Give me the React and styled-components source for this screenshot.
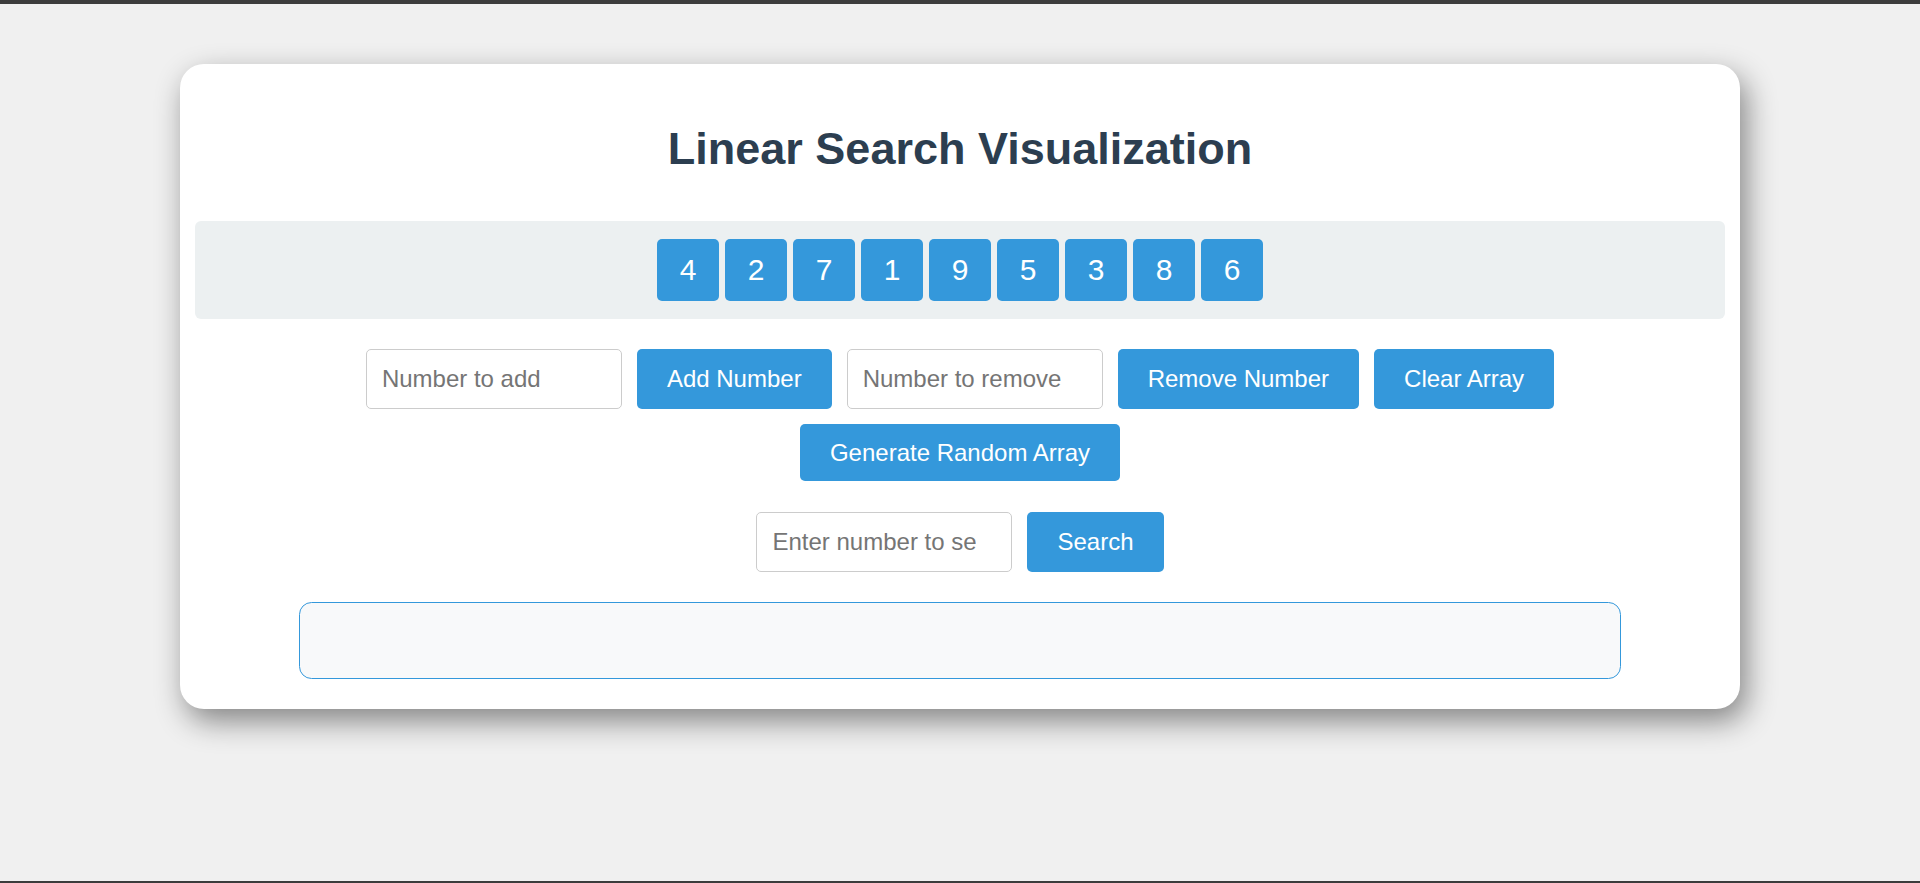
import React from "react";
import styled, { createGlobalStyle } from "styled-components";

const GlobalStyle = createGlobalStyle`
  * {
    box-sizing: border-box;
  }

  body {
    margin: 0;
    background: #f0f0f0;
    font-family: "Liberation Sans", Arial, sans-serif;
  }
`;

const Page = styled.div`
  min-height: 100vh;
  display: flex;
  flex-direction: column;
`;

const FrameBar = styled.div`
  height: ${(p) => p.$size}px;
  background: #3c3c3c;
  flex-shrink: 0;
`;

const Main = styled.main`
  flex: 1;
  padding-top: 60px;
`;

const Card = styled.div`
  width: 1560px;
  margin: 0 auto;
  background: #fff;
  border-radius: 24px;
  padding: 59px 15px 30px;
  box-shadow: 6px 12px 30px rgba(0, 0, 0, 0.45);
`;

const Title = styled.h1`
  margin: 0;
  text-align: center;
  font-size: 45px;
  line-height: 51px;
  font-weight: bold;
  color: #2c3e50;
`;

const ArrayBox = styled.div`
  margin-top: 47px;
  padding: 18px 0;
  background: #ecf0f1;
  border-radius: 6px;
  display: flex;
  justify-content: center;
  gap: 6px;
`;

const Cell = styled.div`
  width: 62px;
  height: 62px;
  display: flex;
  align-items: center;
  justify-content: center;
  background: #3498db;
  color: #fff;
  font-size: 30px;
  border-radius: 5px;
`;

const Controls = styled.div`
  margin-top: 22.8px;
  display: flex;
  flex-wrap: wrap;
  justify-content: center;
  padding: 0 2px;
`;

const Input = styled.input`
  width: 256px;
  margin: 7.5px;
  padding: 15px;
  padding-right: ${(p) => (p.$spin ? "20px" : "15px")};
  font-family: inherit;
  font-size: 24px;
  line-height: 27.6px;
  border: 1px solid #ccc;
  border-radius: 5px;
  color: #333;
  outline: none;

  &::placeholder {
    color: #757575;
  }
`;

const Button = styled.button`
  margin: 7.5px;
  padding: 15px 30px;
  font-family: inherit;
  font-size: 24px;
  line-height: 27.6px;
  background: #3498db;
  color: #fff;
  border: none;
  border-radius: 5px;
  cursor: pointer;

  &:hover {
    background: #2980b9;
  }
`;

const SearchRow = styled.div`
  margin-top: 23.3px;
  display: flex;
  justify-content: center;
  gap: 15px;

  & > * {
    margin: 0;
  }
`;

const Result = styled.div`
  width: 1322px;
  min-height: 77px;
  margin: 30px auto 0;
  background: #f8f9fa;
  border: 1px solid #3498db;
  border-radius: 12.5px;
`;

const numbers = [4, 2, 7, 1, 9, 5, 3, 8, 6];

const App = () => {
  return (
    <Page>
      <GlobalStyle />
      <FrameBar $size={4} />
      <Main>
        <Card>
          <Title>Linear Search Visualization</Title>
          <ArrayBox>
            {numbers.map((n, i) => (
              <Cell key={i}>{n}</Cell>
            ))}
          </ArrayBox>
          <Controls>
            <Input type="number" placeholder="Number to add" />
            <Button>Add Number</Button>
            <Input type="number" placeholder="Number to remove" />
            <Button>Remove Number</Button>
            <Button>Clear Array</Button>
            <Button>Generate Random Array</Button>
          </Controls>
          <SearchRow>
            <Input $spin type="number" placeholder="Enter number to search" />
            <Button>Search</Button>
          </SearchRow>
          <Result />
        </Card>
      </Main>
      <FrameBar $size={2} />
    </Page>
  );
};

export default App;
